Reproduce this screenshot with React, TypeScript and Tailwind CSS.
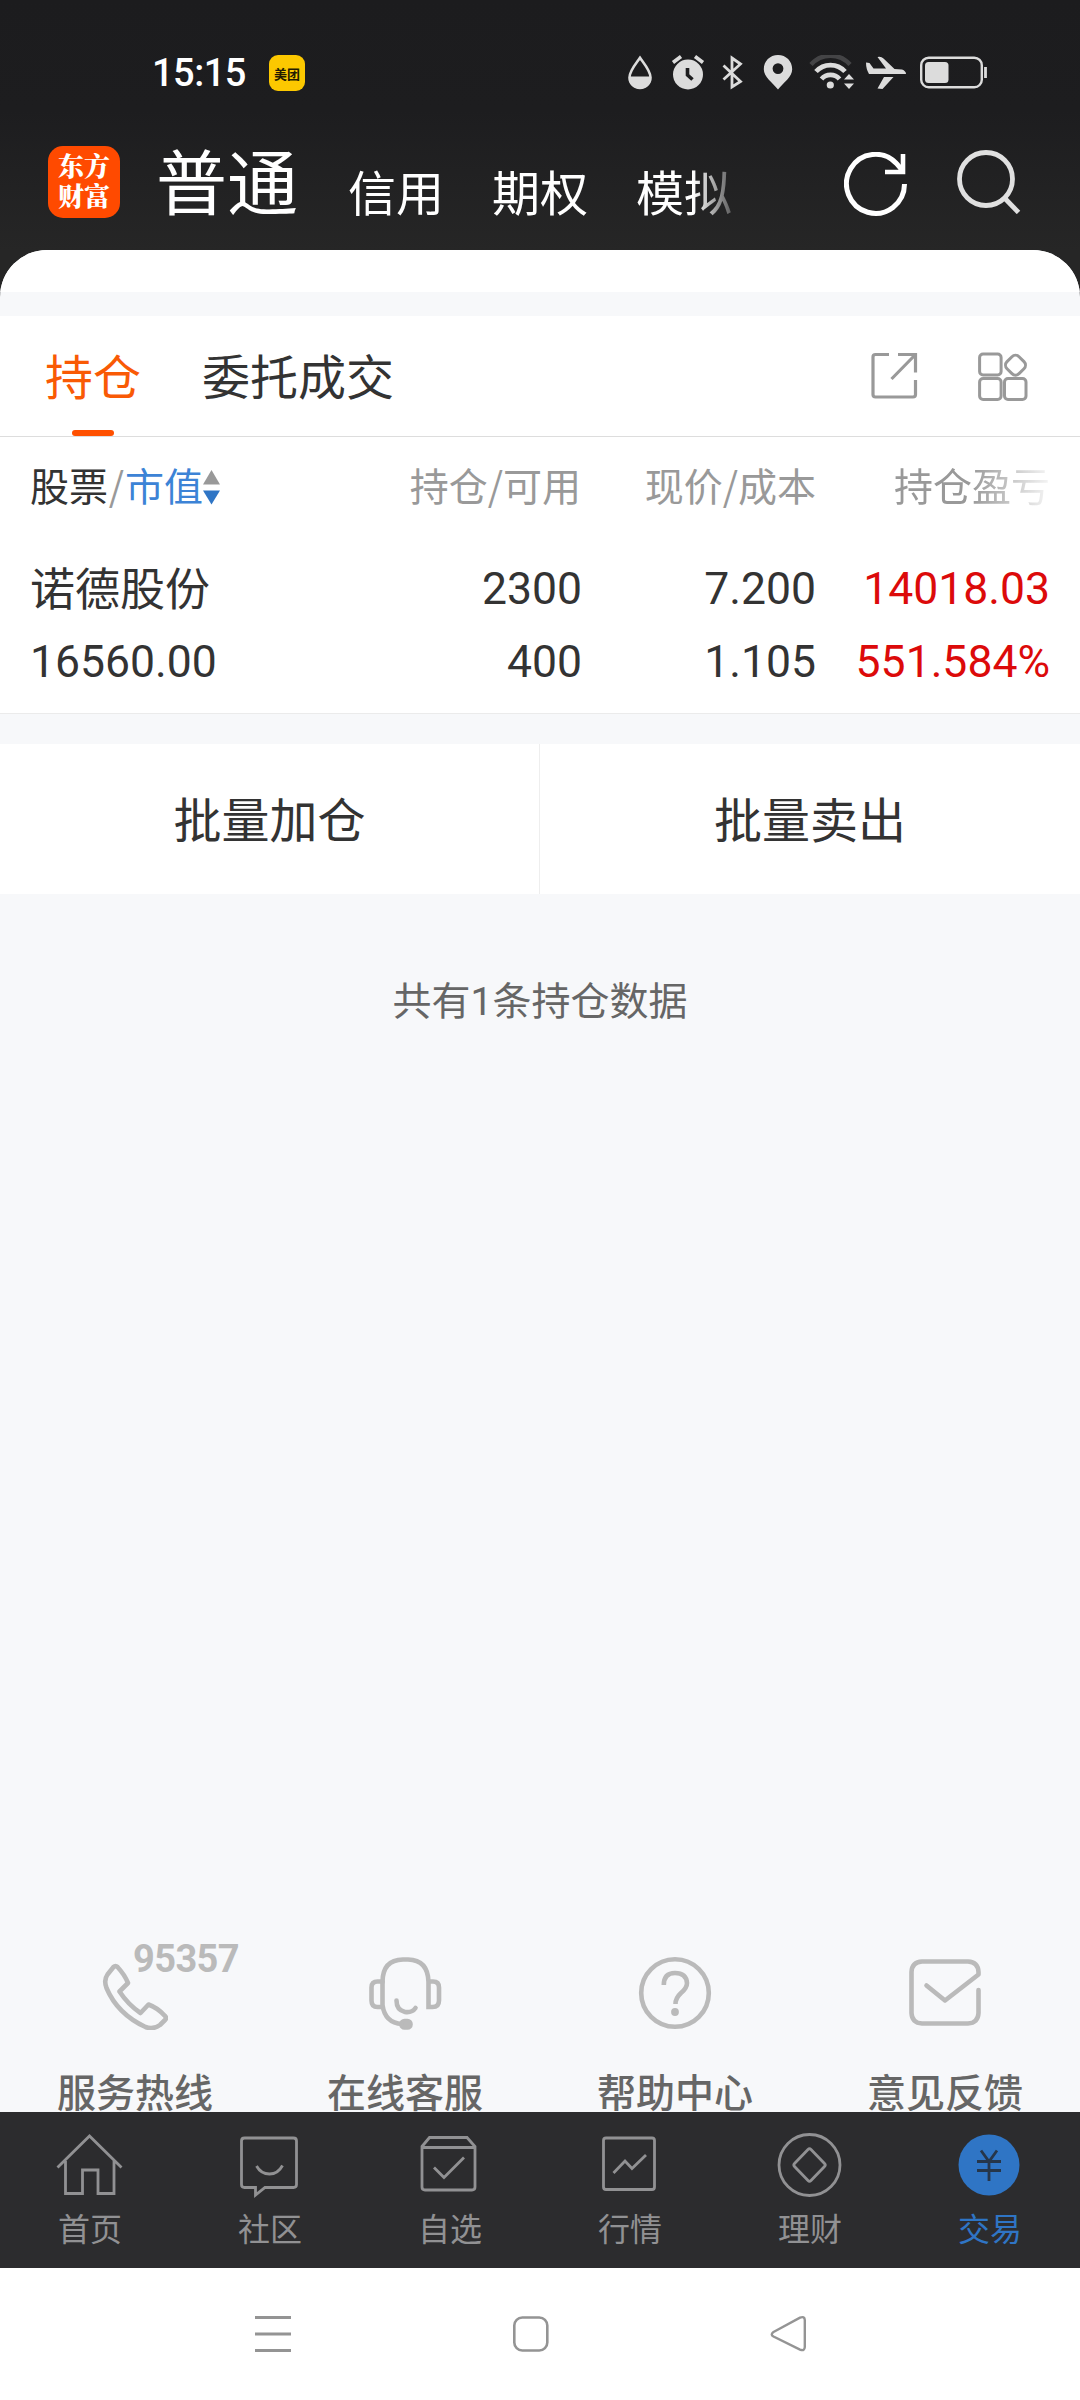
import type { ReactNode } from "react";

const accountTabs = ["信用", "期权", "模拟"];

const holding = {
  name: "诺德股份",
  marketValue: "16560.00",
  volume: "2300",
  available: "400",
  price: "7.200",
  cost: "1.105",
  profit: "14018.03",
  profitRate: "551.584%",
};

function StatusBar() {
  return (
    <div className="flex h-[146px] items-start pl-[152px] pt-[55px] text-[#dcdcdc]">
      <span className="w-[117px] font-[Roboto] text-[38px] font-medium leading-[36px] tracking-[-0.5px] text-white">
        15:15
      </span>
      <span className="flex h-9 w-9 items-center justify-center rounded-[9px] bg-[#fcc800] text-[13px] font-bold leading-none text-[#221a00]">
        美团
      </span>

      <svg className="ml-[322px] h-9 w-[26px]" viewBox="0 0 26 36" fill="none">
        <path
          d="M13 2.8C10 7.5 2.500 15.500 2.500 22.500a10.500 10.500 0 0 0 21 0C23.500 15.500 16 7.500 13 2.800Z"
          stroke="currentColor"
          strokeWidth="2.600"
        />
        <path d="M2 21.500h22v2a11 10.500 0 0 1-22 0Z" fill="currentColor" />
      </svg>
      <svg className="ml-[18px] h-9 w-[34px]" viewBox="0 0 34 36" fill="none">
        <circle cx="17" cy="19.500" r="15" fill="currentColor" />
        <path d="M2 7.500l8-6M32 7.500l-8-6" stroke="currentColor" strokeWidth="3.600" />
        <path d="M16.500 13v7l5 4.500" stroke="#1d1d1f" strokeWidth="3.600" />
      </svg>
      <svg className="ml-4 h-9 w-[24px]" viewBox="0 0 24 36" fill="none">
        <path
          d="M2.500 10.500L19.500 26.500L11 32V3l8.500 6L2.500 24.500"
          stroke="currentColor"
          strokeWidth="2.800"
        />
      </svg>
      <svg className="ml-[18px] h-9 w-[30px]" viewBox="0 0 30 36">
        <path
          fill="currentColor"
          fillRule="evenodd"
          d="M15 0C6.800 0 .8 6.200.8 14.200.8 22 9.500 27.500 15 34.500 20.500 27.500 29.200 22 29.200 14.200 29.200 6.200 23.200 0 15 0Zm0 8.200a5.400 5.400 0 1 1 0 10.800 5.400 5.400 0 0 1 0-10.800Z"
        />
      </svg>
      <svg className="ml-4 h-9 w-[46px]" viewBox="0 0 46 36" fill="none">
        <path d="M2 9.500a26 26 0 0 1 39 0" stroke="#444446" strokeWidth="4.400" />
        <path d="M7 16.500a19.500 19.500 0 0 1 29 0" stroke="currentColor" strokeWidth="4.800" />
        <path d="M12.500 24a12 12 0 0 1 18 0" stroke="currentColor" strokeWidth="4.800" />
        <circle cx="21.300" cy="30" r="3.600" fill="currentColor" />
        <path d="M35 24.500l5-5.500 5 5.500ZM35 28.500l5 5.500 5-5.500Z" fill="currentColor" />
      </svg>
      <svg className="ml-[11px] h-9 w-[40px]" viewBox="0 0 40 36">
        <path
          fill="currentColor"
          d="M0 7.500L3.500 8 7.500 13.500H20L11.500 2 Q15 1 17.500 3.500L28.500 14 36 14.500Q40 16 40 19H3Q0 14 0 7.500Z M18 22H27.500L16.500 34 11.500 33.500Z"
        />
      </svg>
      <svg className="ml-[14px] h-9 w-[68px]" viewBox="0 0 68 36" fill="none">
        <rect x="1.200" y="2.700" width="60.600" height="29.500" rx="7.500" stroke="currentColor" strokeWidth="2.400" />
        <rect x="5" y="7" width="23.500" height="21" rx="3.500" fill="currentColor" />
        <path d="M65.500 12v11" stroke="currentColor" strokeWidth="2.800" />
      </svg>
    </div>
  );
}

function AccountHeader() {
  return (
    <div className="flex h-[104px] items-start pl-12 text-white">
      <p className="h-[72px] w-[72px] rounded-[15px] bg-[#ff4a00] pt-[4px] text-center font-['Noto_Serif_CJK_SC','Noto_Sans_CJK_SC',sans-serif] text-[26px] font-black leading-[30px]">
        东方
        <br />
        财富
      </p>
      <span className="-mt-[4px] ml-[36px] text-[71px] leading-[72px]">普通</span>
      <div className="ml-[50px] mt-[9px] flex w-[400px] gap-12 text-[48px] leading-[70px] [mask-image:linear-gradient(to_right,black_345px,transparent_398px)]">
        {accountTabs.map((tab) => (
          <span key={tab} className="shrink-0">
            {tab}
          </span>
        ))}
      </div>
      <svg className="ml-[96px] mt-[6px] h-[64px] w-[64px]" viewBox="0 0 64 64" fill="none" stroke="#fff" strokeWidth="5">
        <path d="M60.500 32A29 29.500 0 1 1 52.500 11.500Q56 15 58.500 19.500" />
        <path d="M59 2v18H41" strokeWidth="4.600" />
      </svg>
      <svg className="ml-[49px] mt-1 h-[64px] w-[64px]" viewBox="0 0 64 64" fill="none" stroke="#e0e0e0" strokeWidth="4.800">
        <circle cx="29" cy="29" r="26.500" />
        <path d="M48 48.500l13.500 14" />
      </svg>
    </div>
  );
}

function HoldingTabs() {
  return (
    <div className="flex h-[121px] items-start border-b border-[#dddddd] bg-white pl-[45px] text-[48px] leading-[117px]">
      <div className="flex h-[120px] flex-col items-center text-[#f95a05]">
        <span className="h-[114px]">持仓</span>
        <span className="h-[6px] w-[42px] rounded-[3px] bg-[#ff5000]" />
      </div>
      <span className="ml-[61px] text-[#333]">委托成交</span>
      <svg className="ml-auto mt-[35px] h-[48px] w-[48px]" viewBox="0 0 48 48" fill="none" stroke="#999" strokeWidth="3.200">
        <path d="M19 3.500H5.500Q3 3.500 3 6V43.500q0 2.500 2.500 2.500H43q2.500 0 2.500-2.500V29" />
        <path d="M28 3.500h17.500v18M45 4L21.500 28" />
      </svg>
      <svg className="ml-[60px] mr-[52px] mt-[35px] h-[50px] w-[50px]" viewBox="0 0 50 50" fill="none" stroke="#999" strokeWidth="3">
        <rect x="1.600" y="3" width="21.500" height="21" rx="3.500" />
        <rect x="1.600" y="27.500" width="21.500" height="21" rx="3.500" />
        <rect x="26.500" y="27.500" width="21.500" height="21" rx="3.500" />
        <rect x="29" y="5.700" width="17" height="17" rx="5" transform="rotate(45 37.500 14.200)" />
      </svg>
    </div>
  );
}

function Cell({ top, bottom, className = "" }: { top: string; bottom: string; className?: string }) {
  return (
    <div className={`flex flex-col text-right font-[Roboto] text-[44.5px] ${className}`}>
      <span>{top}</span>
      <span>{bottom}</span>
    </div>
  );
}

function HoldingTable() {
  return (
    <div className="h-[277px] border-b border-[#ebebeb] bg-white pl-[30px] pr-[30px]">
      <div className="grid h-[116px] grid-cols-[252px_299px_235px_234px] text-right text-[39px] leading-[95px] text-[#999]">
        <div className="flex items-start text-left">
          <span className="text-[#333]">股票</span>
          <span className="w-[17px] text-center">/</span>
          <span className="text-[#3c83d6]">市值</span>
          <svg className="mt-[33px] h-9 w-[17px]" viewBox="0 0 17 36">
            <path d="M8.500 0L17 14.500H0Z" fill="#999" />
            <path d="M8.500 34.500L17 20.500H0Z" fill="#2f75c5" />
          </svg>
        </div>
        <span>持仓/可用</span>
        <span>现价/成本</span>
        <span className="[mask-image:linear-gradient(to_right,black_155px,transparent_242px)]">
          持仓盈亏
        </span>
      </div>
      <div className="grid grid-cols-[252px_300px_234px_234px] text-[45px] leading-[73px] text-[#333]">
        <div className="flex flex-col">
          <span className="-mt-[3px] mb-[3px] whitespace-nowrap">{holding.name}</span>
          <span className="font-[Roboto] text-[44.5px]">{holding.marketValue}</span>
        </div>
        <Cell top={holding.volume} bottom={holding.available} />
        <Cell top={holding.price} bottom={holding.cost} />
        <Cell top={holding.profit} bottom={holding.profitRate} className="text-[#dc0a0a]" />
      </div>
    </div>
  );
}

function BatchActions() {
  return (
    <div className="mt-[30px] grid h-[150px] grid-cols-2 bg-white text-center text-[48px] leading-[146px] text-[#333]">
      <span className="border-r border-[#eeeeee]">批量加仓</span>
      <span>批量卖出</span>
    </div>
  );
}

function ServiceItem({ label, children }: { label: string; children: ReactNode }) {
  return (
    <div className="flex w-[270px] flex-col items-center">
      <div className="flex h-[113px] w-full shrink-0 justify-center">{children}</div>
      <span className="text-[39px] font-medium leading-[60px] text-[#666]">{label}</span>
    </div>
  );
}

function ServiceRow() {
  return (
    <div className="flex h-[185px] overflow-hidden pt-5 text-[#bababa]">
      <ServiceItem label="服务热线">
        <div className="relative h-[84px] w-[66px]">
          <svg className="mt-[15px] h-[68px] w-[66px]" viewBox="0 0 66 68" fill="none" stroke="currentColor" strokeWidth="4.600" strokeLinejoin="round">
            <path d="M11.500 5Q13.500 3 15.500 5Q22.500 12.500 26 21L17.500 29.500Q26 42.500 38.500 51L46.500 42.500Q56 46 63 54Q65 56 63 58L58 63Q51 68 43.500 65Q15.500 52 4.500 26Q1.500 18 5.500 12.500Z" />
          </svg>
          <span className="absolute left-[31px] top-[-10px] font-[Roboto] text-[38px] font-bold leading-[44px] tracking-[-0.6px]">
            95357
          </span>
        </div>
      </ServiceItem>
      <ServiceItem label="在线客服">
        <svg className="mt-[9px] h-[74px] w-[74px]" viewBox="0 0 74 74" fill="none" stroke="currentColor" strokeWidth="4.600" strokeLinecap="round">
          <path d="M14.500 26Q14.500 4 35 3.500h5Q60 4 60.500 26V51h4q6.500 0 6.500-6.500V31.500Q71 25.500 65 25.500h-4" />
          <path d="M14.500 25.500h-5Q3.500 25.500 3.500 31.500V44.500Q3.500 51 9.500 51h5M14.500 26V49Q17 67 34 68" />
          <path d="M28.500 44.500Q28.500 54 37 56Q44 57 47.500 52" />
          <rect x="33.500" y="65" width="9" height="6.500" rx="3" fill="currentColor" />
        </svg>
      </ServiceItem>
      <ServiceItem label="帮助中心">
        <svg className="mt-[9px] h-[74px] w-[74px]" viewBox="0 0 74 74" fill="none" stroke="currentColor" strokeWidth="4.600">
          <circle cx="37" cy="37" r="33.800" />
          <path d="M25.800 29Q25.800 17 37 17T49 27Q49 32 43 37Q37.500 42 37.500 48" />
          <circle cx="37" cy="56" r="3.900" fill="currentColor" stroke="none" />
        </svg>
      </ServiceItem>
      <ServiceItem label="意见反馈">
        <svg className="mt-[9px] h-[74px] w-[74px]" viewBox="0 0 74 74" fill="none" stroke="currentColor" strokeWidth="4.600" strokeLinecap="round" strokeLinejoin="round">
          <path d="M70.500 34v23Q70 67 60 67.500H14Q4 67 3.500 57V16Q4 6 14 5.500H60Q70 6 70.500 16V18.500L37 44.500L18.500 29.500" />
        </svg>
      </ServiceItem>
    </div>
  );
}

const bottomTabs: { label: string; icon: ReactNode }[] = [
  {
    label: "首页",
    icon: (
      <path d="M2.500 35.500L34.500 4L66.500 35.500M10.500 29V61.500H27.500V38H43V61.500H59V29" />
    ),
  },
  {
    label: "社区",
    icon: (
      <>
        <path d="M9.500 6H58.500Q61.500 6 61.500 9V52.500Q61.500 55.500 58.500 55.500H30L20.500 63V55.500H9.500Q6.500 55.500 6.500 52.500V9Q6.500 6 9.500 6Z" />
        <path d="M21.500 34Q26 42 34.500 42T47.500 33.500" />
      </>
    ),
  },
  {
    label: "自选",
    icon: (
      <>
        <path d="M7 14.500L14.500 5.500H52L60 14.500V55Q60 58 57 58H10Q7 58 7 55ZM7 15.500H60" />
        <path d="M19 35.500L29 45.500L49 25.500" />
      </>
    ),
  },
  {
    label: "行情",
    icon: (
      <>
        <rect x="8.500" y="6" width="51" height="51.500" rx="2.500" />
        <path d="M18.500 41L30 29L37 36.500L51 23" />
      </>
    ),
  },
  {
    label: "理财",
    icon: (
      <>
        <circle cx="34.500" cy="33" r="30.500" />
        <path d="M33 17.500Q34.500 16 36 17.500L49.500 31.500Q51 33 49.500 34.500L36 48.500Q34.500 50 33 48.500L19.500 34.500Q18 33 19.500 31.500Z" />
      </>
    ),
  },
  {
    label: "交易",
    icon: (
      <>
        <circle cx="34" cy="33" r="30.500" fill="#2f75c5" stroke="none" />
        <path d="M26 18.500L34 29.500L42 18.500M34 29.500V49M22 29.500H46M22 38.500H46" stroke="#26364a" />
      </>
    ),
  },
];

function BottomTabs() {
  return (
    <nav className="grid h-[156px] grid-cols-6 bg-[#2c2c2e] pt-[20px]">
      {bottomTabs.map(({ label, icon }) => (
        <div
          key={label}
          className={`flex flex-col items-center ${label === "交易" ? "text-[#2f75c5]" : "text-[#919193]"}`}
        >
          <svg className="mr-[2px] h-[68px] w-[68px]" viewBox="0 0 68 68" fill="none" stroke="currentColor" strokeWidth="2.800">
            {icon}
          </svg>
          <span className="mt-[7px] text-[32px] leading-10">{label}</span>
        </div>
      ))}
    </nav>
  );
}

function SystemNav() {
  return (
    <div className="flex h-[132px] items-start bg-white pl-[254px] pt-[47px] text-[#949494]">
      <svg className="h-[38px] w-[38px]" viewBox="0 0 38 38" stroke="currentColor" strokeWidth="3">
        <path d="M1 2.500h36M1 19h36M1 35.500h36" />
      </svg>
      <svg className="ml-[220px] h-[38px] w-[38px]" viewBox="0 0 38 38" fill="none" stroke="currentColor" strokeWidth="2.600">
        <rect x="2.300" y="2.500" width="33" height="33" rx="8" />
      </svg>
      <svg className="ml-[220px] h-[38px] w-[38px]" viewBox="0 0 38 38" fill="none" stroke="currentColor" strokeWidth="2.400">
        <path d="M3.500 17L30 2.600Q34.600 1 34.800 5V32Q34.600 36.400 30 34.600L3.500 21.500Q0 19.500 3.500 17Z" />
      </svg>
    </div>
  );
}

export default function App() {
  return (
    <div className="flex h-[2400px] w-[1080px] flex-col overflow-hidden bg-[#f7f8fa] font-['Noto_Sans_CJK_SC',sans-serif]">
      <header className="bg-[linear-gradient(to_bottom,#1c1c1e_0px,#1d1d1f_110px,#262626_250px)]">
        <StatusBar />
        <AccountHeader />
        <div className="h-[66px] overflow-hidden rounded-t-[47px] bg-[#f7f8fa]">
          <div className="h-[42px] bg-white" />
        </div>
      </header>
      <HoldingTabs />
      <HoldingTable />
      <BatchActions />
      <p className="mt-[75px] text-center text-[39px] leading-[58px] text-[#666]">
        共有<span className="font-[Roboto]">1</span>条持仓数据
      </p>
      <div className="flex-1" />
      <ServiceRow />
      <BottomTabs />
      <SystemNav />
    </div>
  );
}
